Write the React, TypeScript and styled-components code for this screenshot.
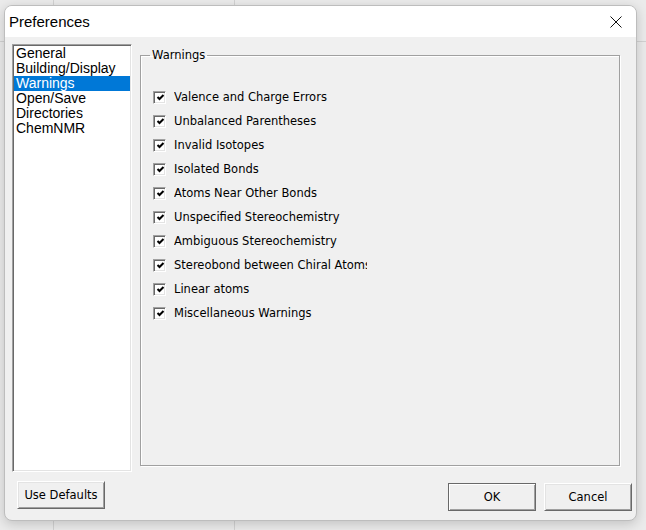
import React from "react";
import styled, { createGlobalStyle } from "styled-components";

const Global = createGlobalStyle`
  html, body {
    margin: 0;
    padding: 0;
  }
  body {
    width: 646px;
    height: 530px;
    overflow: hidden;
    background:
      linear-gradient(#d2d2d2, #d2d2d2) 53px 0 / 1px 100% no-repeat,
      linear-gradient(#d2d2d2, #d2d2d2) 234px 0 / 1px 100% no-repeat,
      linear-gradient(#d2d2d2, #d2d2d2) 0 41px / 100% 1px no-repeat,
      #ebebeb;
    font-family: "DejaVu Sans", "Liberation Sans", sans-serif;
  }
  #root {
    padding: 5px 0 0 4px;
  }
`;

const categories = [
  "General",
  "Building/Display",
  "Warnings",
  "Open/Save",
  "Directories",
  "ChemNMR",
];

const warnings = [
  "Valence and Charge Errors",
  "Unbalanced Parentheses",
  "Invalid Isotopes",
  "Isolated Bonds",
  "Atoms Near Other Bonds",
  "Unspecified Stereochemistry",
  "Ambiguous Stereochemistry",
  "Stereobond between Chiral Atoms",
  "Linear atoms",
  "Miscellaneous Warnings",
];

const CheckMark = () => (
  <svg width="9" height="9" viewBox="0 0 9 9">
    <path d="M1.5 4 L3.5 6 L7.5 2" fill="none" stroke="#000" strokeWidth="2" />
  </svg>
);

const CloseIcon = () => (
  <svg width="12" height="12" viewBox="0 0 12 12">
    <path d="M0.5 0.5 L11.5 11.5 M11.5 0.5 L0.5 11.5" stroke="#111" strokeWidth="1" />
  </svg>
);

export default function App() {
  return (
    <>
      <Global />
      <Window>
        <TitleBar>
          <Title>Preferences</Title>
          <CloseButton>
            <CloseIcon />
          </CloseButton>
        </TitleBar>
        <Body>
          <LeftColumn>
            <ListBox>
              {categories.map((c) => (
                <ListItem key={c} $selected={c === "Warnings"}>
                  {c}
                </ListItem>
              ))}
            </ListBox>
            <Button $width={88} $left={5} $top={9}>
              Use Defaults
            </Button>
          </LeftColumn>
          <RightColumn>
            <GroupBox>
              <Legend>Warnings</Legend>
              <Rows>
                {warnings.map((w) => (
                  <Row key={w}>
                    <CheckBox>
                      <CheckMark />
                    </CheckBox>
                    <Label>{w}</Label>
                  </Row>
                ))}
              </Rows>
            </GroupBox>
            <ButtonRow>
              <Button $width={88} $default>
                OK
              </Button>
              <Button $width={88}>Cancel</Button>
            </ButtonRow>
          </RightColumn>
        </Body>
      </Window>
    </>
  );
}

const Window = styled.div`
  width: 633px;
  height: 516px;
  box-sizing: border-box;
  border: 1px solid #bdbdbd;
  border-radius: 8px;
  overflow: hidden;
  background: #f0f0f0;
  box-shadow: 0 3px 12px rgba(0, 0, 0, 0.18);
  display: flex;
  flex-direction: column;
`;

const TitleBar = styled.div`
  height: 31px;
  background: #fff;
  display: flex;
  align-items: center;
  justify-content: space-between;
  padding: 0 14px 0 4px;
`;

const Title = styled.div`
  font-family: "Liberation Sans", Arial, sans-serif;
  font-size: 15px;
  color: #000;
  padding-bottom: 1px;
`;

const CloseButton = styled.div`
  width: 12px;
  height: 12px;
  display: flex;
`;

const Body = styled.div`
  flex: 1;
  display: flex;
  gap: 8px;
  padding: 7px 16px 0 7px;
`;

const LeftColumn = styled.div`
  width: 120px;
  display: flex;
  flex-direction: column;
  align-items: flex-start;
`;

const ListBox = styled.div`
  width: 120px;
  height: 428px;
  box-sizing: border-box;
  background: #fff;
  border: 1px solid;
  border-color: #a0a0a0 #fff #fff #a0a0a0;
  box-shadow: inset 1px 1px 0 #696969, inset -1px -1px 0 #e3e3e3;
  padding: 1px 1px 0 1px;
`;

const ListItem = styled.div<{ $selected?: boolean }>`
  height: 15px;
  line-height: 15px;
  padding-left: 2px;
  font-family: "Liberation Sans", Arial, sans-serif;
  font-size: 14px;
  color: ${(p) => (p.$selected ? "#fff" : "#000")};
  background: ${(p) => (p.$selected ? "#0078d7" : "transparent")};
  white-space: nowrap;
`;

const RightColumn = styled.div`
  width: 480px;
  display: flex;
  flex-direction: column;
`;

const GroupBox = styled.fieldset`
  margin: 4px 0 0 0;
  height: 418px;
  box-sizing: border-box;
  border: 1px solid #a0a0a0;
  box-shadow: inset 1px 1px 0 #fff, 1px 1px 0 #fff;
  padding: 0 0 0 9px;
  min-width: 0;
`;

const Legend = styled.legend`
  font-size: 11.5px;
  line-height: 15px;
  color: #000;
  padding: 0 2px;
`;

const Rows = styled.div`
  padding-top: 22px;
  padding-left: 3px;
  display: flex;
  flex-direction: column;
`;

const Row = styled.div`
  height: 24px;
  display: flex;
  align-items: center;
  gap: 8px;
`;

const CheckBox = styled.div`
  width: 13px;
  height: 13px;
  box-sizing: border-box;
  background: #fff;
  border: 1px solid;
  border-color: #a0a0a0 #fff #fff #a0a0a0;
  box-shadow: inset 1px 1px 0 #696969, inset -1px -1px 0 #e3e3e3;
  display: flex;
  align-items: center;
  justify-content: center;
  padding: 1px 0 0 1px;
`;

const Label = styled.div`
  width: 193px;
  overflow: hidden;
  white-space: nowrap;
  font-size: 11.5px;
  color: #000;
`;

const ButtonRow = styled.div`
  display: flex;
  justify-content: flex-end;
  gap: 8px;
  margin: 17px -12px 0 0;
`;

const Button = styled.div<{ $width: number; $left?: number; $top?: number; $default?: boolean }>`
  width: ${(p) => p.$width}px;
  height: 28px;
  box-sizing: border-box;
  margin-left: ${(p) => p.$left ?? 0}px;
  margin-top: ${(p) => p.$top ?? 0}px;
  background: #f0f0f0;
  border: 1px solid;
  border-color: ${(p) => (p.$default ? "#696969" : "#fff #696969 #696969 #fff")};
  box-shadow: ${(p) =>
    p.$default
      ? "inset 1px 1px 0 #fff, inset -1px -1px 0 #a0a0a0"
      : "inset 1px 1px 0 #e3e3e3, inset -1px -1px 0 #a0a0a0"};
  display: flex;
  align-items: center;
  justify-content: center;
  font-size: 11.5px;
  color: #000;
`;
